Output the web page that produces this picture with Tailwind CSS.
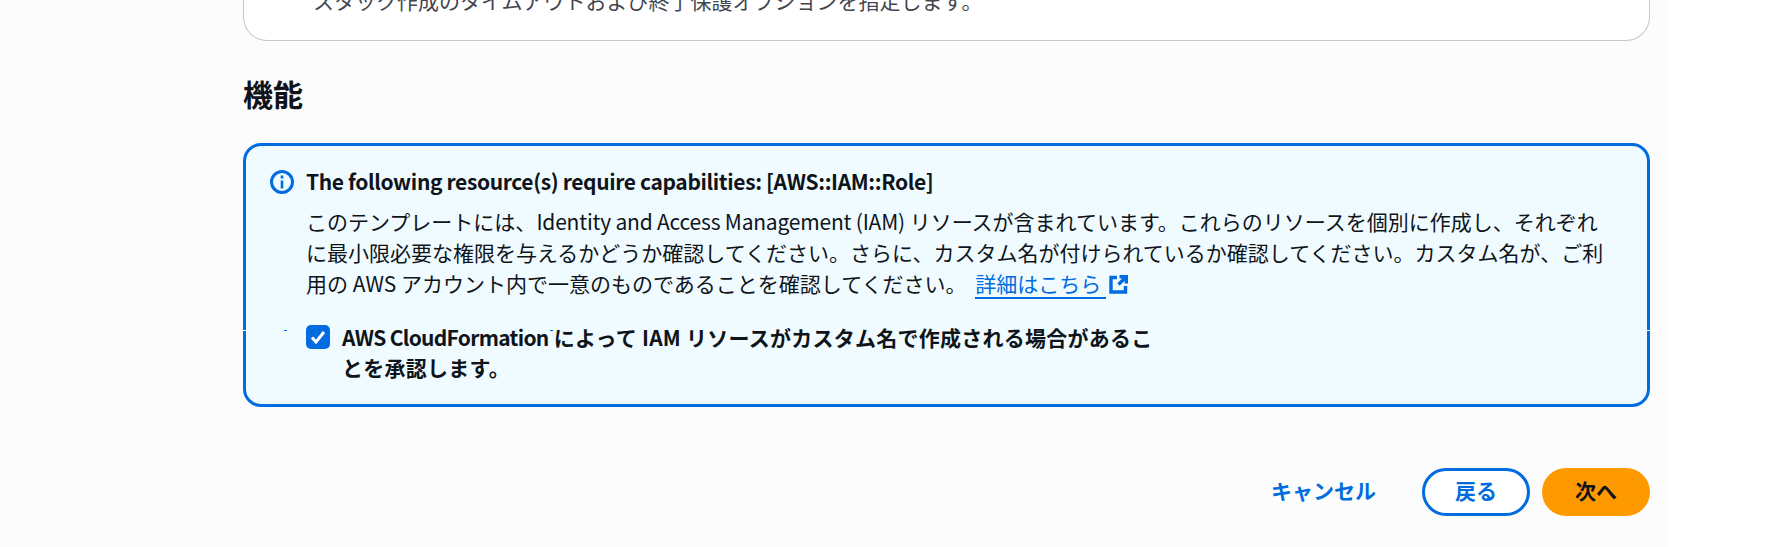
<!DOCTYPE html>
<html lang="ja">
<head>
    <meta charset="UTF-8">
    <title>機能</title>
    <script src="https://cdn.jsdelivr.net/npm/@tailwindcss/browser@4"></script>
</head>
<body class="relative bg-white font-['Noto_Sans_CJK_JP',sans-serif] text-[#0f141a] overflow-hidden">
    <div class="w-[1668px] h-[547px] bg-[#fcfcfc] pl-[243px] pr-[18px]">
        <!-- Previous card, cut off by the top edge -->
        <div class="h-[41px] overflow-hidden bg-white border border-t-0 border-[#c6c6cd] rounded-b-[24px] pl-[69px] text-[21px] leading-[20px] text-[#424650]">
            <p class="relative -top-[10px]">スタック作成のタイムアウトおよび終了保護オプションを指定します。</p>
        </div>

        <h2 class="mt-[32px] text-[30px] leading-[40px] font-bold">機能</h2>

        <!-- Capabilities alert -->
        <div class="mt-[30px] h-[264px] bg-[#f0fbff] border-[3px] border-[#006ce0] rounded-[18px] pl-[24px] pr-[33px] pt-[22px]">
            <div class="flex items-center gap-[12px] h-[28px]">
                <svg class="w-[24px] h-[24px] shrink-0" viewBox="0 0 24 24" fill="none" stroke="#006ce0" stroke-width="3">
                    <circle cx="12" cy="12" r="10.5"/>
                    <path stroke-width="2.6" d="M12 10.5v8M12 5.5v3"/>
                </svg>
                <span class="text-[21px] font-bold tracking-[-0.37px] whitespace-nowrap">The following resource(s) require capabilities: [AWS::IAM::Role]</span>
            </div>
            <p class="mt-[10px] ml-[36px] text-[21px] leading-[31px]">
                このテンプレートには、<span class="tracking-[-0.2px]">Identity and Access Management (IAM)</span> リソースが含まれています。これらのリソースを個別に作成し、それぞれに最小限必要な権限を与えるかどうか確認してください。さらに、カスタム名が付けられているか確認してください。カスタム名が、ご利用の AWS アカウント内で一意のものであることを確認してください。
                <a class="ml-[4px] inline-flex items-center gap-[3px] text-[#006ce0]"><span class="border-b-[2px] border-[#006ce0] leading-[28px] pr-[5px]">詳細はこちら</span>
                    <svg class="w-[19px] h-[19px]" viewBox="0 0 19 19" fill="none" stroke="#006ce0" stroke-width="3.4"><path d="M8 2.5H2V17h14.5v-6M9.5 9.5L17 2M10.5 1.7H17.3V8.5"/></svg>
                </a>
            </p>
            <div class="mt-[23px] ml-[36px] flex items-start gap-[12px]">
                <span class="mt-[3px] w-[24px] h-[24px] rounded-[5px] bg-[#006ce0] flex items-center justify-center shrink-0">
                    <svg class="w-[16px] h-[16px]" viewBox="0 0 16 16" fill="none" stroke="#fff" stroke-width="3"><path d="M2 8.5l4 4.5 8-10"/></svg>
                </span>
                <span class="w-[812px] text-[21px] leading-[30px] font-bold tracking-[0.25px]"><span class="tracking-[-0.7px]">AWS CloudFormation</span> によって IAM リソースがカスタム名で作成される場合があることを承認します。</span>
            </div>
        </div>

        <div class="mt-[61px] flex justify-end items-center">
            <span class="text-[#006ce0] font-bold text-[21px] mr-[46px] pb-[2px]">キャンセル</span>
            <span class="w-[108px] h-[48px] mr-[12px] pb-[2px] rounded-full border-[3px] border-[#006ce0] text-[#006ce0] bg-white font-bold text-[21px] flex items-center justify-center">戻る</span>
            <span class="w-[108px] h-[48px] pb-[2px] rounded-full bg-[#ff9900] font-bold text-[21px] flex items-center justify-center">次へ</span>
        </div>
    </div>

    <!-- Thin light seam that runs over the alert in the screenshot -->
    <div class="absolute left-0 top-[330px] w-[246px] h-px bg-white"></div>
    <div class="absolute left-[246px] top-[330px] w-[60px] h-px bg-white/40"></div>
    <div class="absolute left-[284px] top-[330px] w-[3px] h-px bg-[#006ce0]"></div>
    <div class="absolute left-[550px] top-[330px] w-[3px] h-px bg-[#006ce0]"></div>
    <div class="absolute left-[1646px] top-[330px] w-[22px] h-px bg-white"></div>
</body>
</html>
